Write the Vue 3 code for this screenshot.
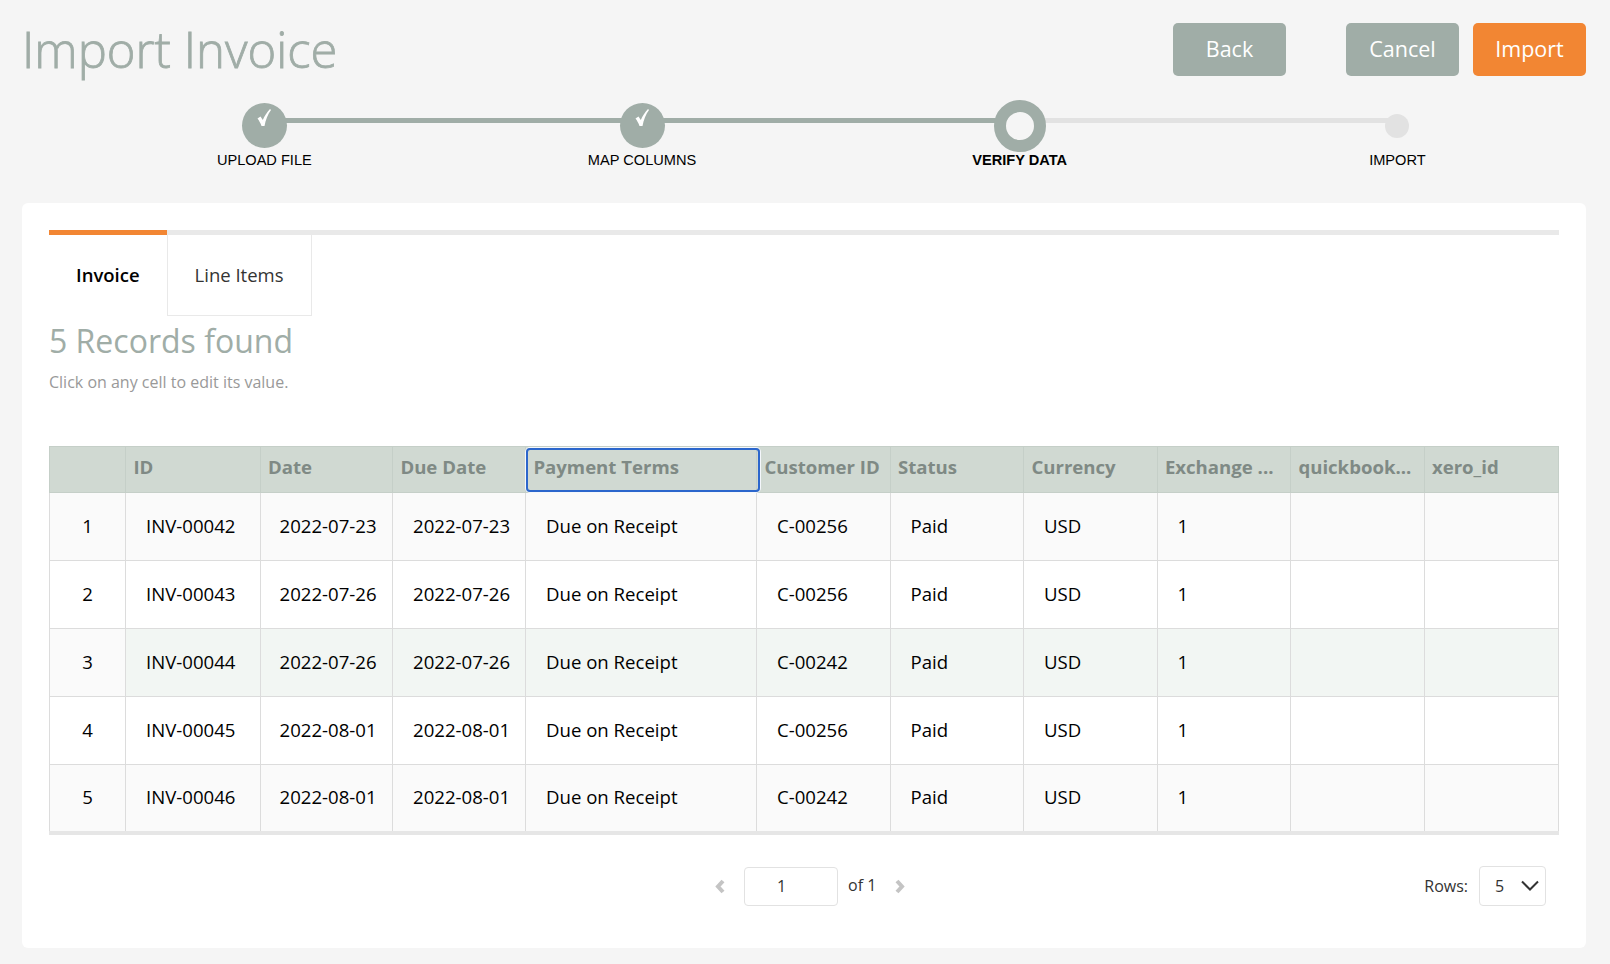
<script setup>
const steps = [
  { label: 'UPLOAD FILE', state: 'done' },
  { label: 'MAP COLUMNS', state: 'done' },
  { label: 'VERIFY DATA', state: 'current' },
  { label: 'IMPORT', state: 'todo' },
]

const columns = ['', 'ID', 'Date', 'Due Date', 'Payment Terms', 'Customer ID', 'Status', 'Currency', 'Exchange ...', 'quickbook...', 'xero_id']

const rows = [
  { n: 1, id: 'INV-00042', date: '2022-07-23', due: '2022-07-23', customer: 'C-00256' },
  { n: 2, id: 'INV-00043', date: '2022-07-26', due: '2022-07-26', customer: 'C-00256' },
  { n: 3, id: 'INV-00044', date: '2022-07-26', due: '2022-07-26', customer: 'C-00242' },
  { n: 4, id: 'INV-00045', date: '2022-08-01', due: '2022-08-01', customer: 'C-00256' },
  { n: 5, id: 'INV-00046', date: '2022-08-01', due: '2022-08-01', customer: 'C-00242' },
]
</script>

<template>
  <div class="page">
    <header class="top">
      <h1>Import Invoice</h1>
      <div class="actions">
        <button class="btn">Back</button>
        <button class="btn cancel">Cancel</button>
        <button class="btn primary">Import</button>
      </div>
    </header>

    <ol class="stepper">
      <li v-for="step in steps" :key="step.label" class="step" :class="step.state">
        <span class="dot">
          <svg v-if="step.state === 'done'" width="14" height="17" viewBox="0 0 14 17">
            <path d="M0.5 9.5 L3.5 7.5 L5.8 11 C7.5 7 10 3 13 0 L14 1 C11 5 8.5 11 7.5 17 L4.5 17 C3.5 14 2 11.5 0.5 9.5 Z" fill="#fff" />
          </svg>
        </span>
        <span class="step-label">{{ step.label }}</span>
      </li>
    </ol>

    <section class="card">
      <div class="tabs">
        <div class="tab active">Invoice</div>
        <div class="tab">Line Items</div>
      </div>

      <h2>5 Records found</h2>
      <p class="hint">Click on any cell to edit its value.</p>

      <table class="grid">
        <colgroup>
          <col class="c-num" />
          <col class="c-id" />
          <col class="c-date" />
          <col class="c-due" />
          <col class="c-terms" />
          <col class="c-std" />
          <col class="c-std" />
          <col class="c-std" />
          <col class="c-std" />
          <col class="c-std" />
          <col />
        </colgroup>
        <thead>
          <tr>
            <th v-for="(col, i) in columns" :key="i" :class="{ focused: col === 'Payment Terms' }">{{ col }}</th>
          </tr>
        </thead>
        <tbody>
          <tr v-for="row in rows" :key="row.n" :class="'row-' + row.n">
            <td class="num">{{ row.n }}</td>
            <td>{{ row.id }}</td>
            <td class="date">{{ row.date }}</td>
            <td>{{ row.due }}</td>
            <td>Due on Receipt</td>
            <td>{{ row.customer }}</td>
            <td>Paid</td>
            <td>USD</td>
            <td>1</td>
            <td></td>
            <td></td>
          </tr>
        </tbody>
      </table>

      <footer class="pager">
        <div class="pages">
          <svg class="chev" width="10" height="15" viewBox="0 0 10 15"><path d="M8 2 L3 7.5 L8 13" /></svg>
          <input class="page-input" value="1" />
          <span class="of">of 1</span>
          <svg class="chev" width="10" height="15" viewBox="0 0 10 15"><path d="M2 2 L7 7.5 L2 13" /></svg>
        </div>
        <div class="rows-select">
          <span>Rows:</span>
          <div class="select">
            <span>5</span>
            <svg width="18" height="11" viewBox="0 0 18 11"><path d="M1 1.5 L9 9.5 L17 1.5" /></svg>
          </div>
        </div>
      </footer>
    </section>
  </div>
</template>

<style>
html, body { margin: 0; background: #f5f5f5; }
</style>

<style scoped>
.page {
  height: 964px;
  box-sizing: border-box;
  padding: 0 24px 0 22px;
  font-family: "Open Sans", sans-serif;
  color: #000;
  overflow: hidden;
}

.top {
  display: flex;
  justify-content: space-between;
  align-items: flex-start;
  height: 100px;
}
h1 {
  margin: 16px 0 0;
  font-size: 49px;
  line-height: 66px;
  font-weight: 300;
  -webkit-text-stroke: 0.8px #a0ada7;
  color: #a0ada7;
}
.actions {
  display: flex;
  margin-top: 23px;
}
.btn {
  width: 113px;
  height: 53px;
  padding: 0 0 2px;
  border: none;
  border-radius: 5px;
  background: #a0ada7;
  color: #fff;
  font: 400 21.5px "Open Sans", sans-serif;
}
.btn.cancel { margin-left: 60px; }
.btn.primary { margin-left: 14px; background: #f28633; }

.stepper {
  list-style: none;
  display: grid;
  grid-template-columns: repeat(4, 377.7px);
  margin: 0 0 0 53.5px;
  padding: 0;
  height: 103px;
}
.step {
  position: relative;
  display: flex;
  flex-direction: column;
  align-items: center;
}
/* connecting line runs from this step to the next one */
.step::after {
  content: '';
  position: absolute;
  top: 18px;
  left: 50%;
  width: 100%;
  height: 4.5px;
  background: #a0ada7;
}
.step.current::after { background: #e2e2e2; }
.step.todo::after { display: none; }
.dot {
  position: relative;
  z-index: 1;
  box-sizing: border-box;
  display: flex;
  justify-content: center;
  border-radius: 50%;
  background: #a0ada7;
}
.done .dot {
  width: 45px;
  height: 45px;
  margin-top: 3px;
  padding-top: 6px;
}
.current .dot {
  width: 52px;
  height: 52px;
  background: #f5f5f5;
  border: 12px solid #a0ada7;
}
.todo .dot {
  width: 24px;
  height: 24px;
  margin-top: 14px;
  background: #e2e2e2;
}
.step-label {
  position: absolute;
  top: 51px;
  font: 400 14.6px/18px "Liberation Sans", Arial, sans-serif;
  white-space: nowrap;
}
.current .step-label { font-weight: 700; }

.card {
  height: 745px;
  box-sizing: border-box;
  padding: 27px 27px 0;
  background: #fff;
  border-radius: 6px;
}

.tabs {
  display: flex;
  height: 81px;
  border-top: 5px solid #e9e9e9;
}
.tab {
  box-sizing: border-box;
  padding: 27px 27px 0;
  font-size: 18.5px;
  line-height: 26px;
  color: #333;
  border: 1px solid #e9e9e9;
  border-top: none;
}
.tab.active {
  margin-top: -5px;
  padding: 27px 27px 0;
  border: none;
  border-top: 5px solid #f28633;
  font-weight: 600;
  color: #000;
}

h2 {
  margin: 4px 0 0;
  font-size: 32px;
  line-height: 42px;
  font-weight: 400;
  color: #a0ada7;
}
.hint {
  margin: 9px 0 0;
  font-size: 16px;
  line-height: 22px;
  color: #999;
}

.grid {
  width: 1510px;
  margin-top: 53px;
  table-layout: fixed;
  border-collapse: collapse;
  border-bottom: 4px solid #e6e6e6;
}
.c-num { width: 76px; }
.c-id { width: 134.5px; }
.c-date { width: 132.5px; }
.c-due { width: 133px; }
.c-terms { width: 231px; }
.c-std { width: 133.5px; }

th {
  position: relative;
  box-sizing: border-box;
  height: 46px;
  padding: 0 8px 7px 7.4px;
  background: #d0d9d2;
  border: 1px solid #c5cfc8;
  color: #7f8a85;
  font-size: 18.6px;
  font-weight: 700;
  text-align: left;
  white-space: nowrap;
}
/* selected header cell, sticks out over the next column */
th.focused::after {
  content: '';
  position: absolute;
  z-index: 1;
  top: 1px;
  left: 0;
  right: -4px;
  bottom: 0;
  border: 2px solid #2b66cc;
  border-radius: 4px;
  box-shadow: 0 0 0 1px #f4f7fb;
}
td {
  box-sizing: border-box;
  height: 68px;
  padding: 0 20px 2px;
  border: 1px solid #dcdcdc;
  font-size: 18.6px;
  white-space: nowrap;
}
td.num { text-align: center; }
td.date { padding-left: 19px; }
.row-1 td, .row-5 td { background: #fafafa; }
.row-2 td, .row-4 td { background: #fff; }
.row-3 td { background: #f2f6f3; }
.row-3 td.num { background: #fafafa; }

.pager {
  position: relative;
  display: flex;
  justify-content: flex-end;
  margin-top: 31px;
  padding-right: 13px;
}
.pages {
  position: absolute;
  left: 666px;
  top: 1px;
  display: flex;
  align-items: center;
  font-size: 16px;
  color: #333;
}
.chev { fill: none; stroke: #c4c4c4; stroke-width: 4; }
.page-input {
  box-sizing: border-box;
  width: 94px;
  height: 39px;
  margin: 0 10px 0 19px;
  padding: 0 0 0 32px;
  border: 1px solid #e2e2e2;
  border-radius: 4px;
  font: 400 16px "Open Sans", sans-serif;
  color: #333;
}
.of { margin: -2px 19px 0 0; }
.rows-select {
  display: flex;
  align-items: center;
  gap: 11px;
  font-size: 16px;
  color: #333;
}
.select {
  box-sizing: border-box;
  display: flex;
  align-items: center;
  justify-content: space-between;
  width: 67px;
  height: 40px;
  padding: 0 6px 0 15px;
  border: 1px solid #e2e2e2;
  border-radius: 4px;
}
.select svg { fill: none; stroke: #333; stroke-width: 2; }
</style>
